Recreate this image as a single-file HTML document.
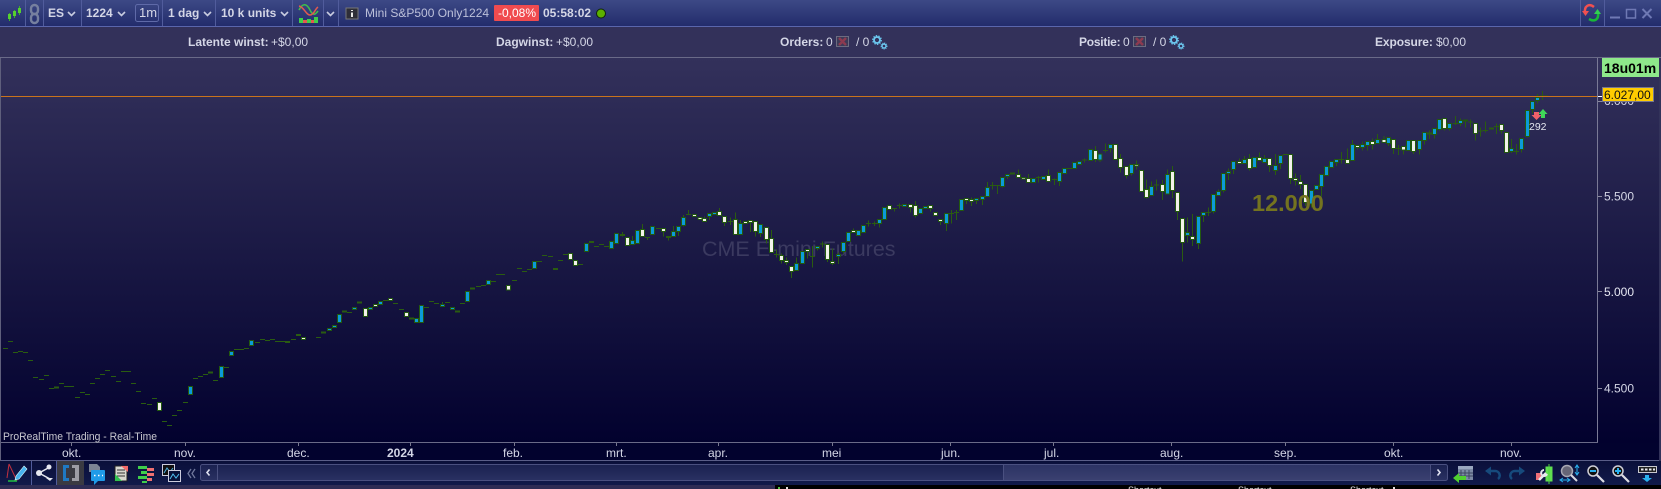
<!DOCTYPE html>
<html lang="nl"><head><meta charset="utf-8"><title>ProRealTime ES</title>
<style>
html,body{margin:0;padding:0;background:#000;width:1661px;height:489px;overflow:hidden}
svg{display:block}
text{font-family:"Liberation Sans",sans-serif;font-size:12px;fill:#d4d6e6}
.h{font-weight:bold}
.w{fill:#f2f2ea;stroke:#22580f;stroke-width:3;transform:translate(-.5px,0)}
.b{fill:#0c9bd8;stroke:#22580f;stroke-width:3;transform:translate(-.5px,0)}
.k{fill:none;stroke:#2a5c10;stroke-width:3;transform:translate(.5px,0)}
.t{fill:none;stroke:#2a5c10;stroke-width:6;transform:translate(.5px,0)}
.c path{shape-rendering:crispEdges}
.d{fill:none;stroke:#c8cce0;stroke-width:1.6}
.s{stroke:#515c9c;stroke-width:1}
</style></head><body>
<svg width="1661" height="489" viewBox="0 0 1661 489" xmlns="http://www.w3.org/2000/svg">
<defs>
<linearGradient id="g1" x1="0" y1="0" x2="0" y2="1"><stop offset="0" stop-color="#3d4986"/><stop offset="1" stop-color="#232c6c"/></linearGradient>
<linearGradient id="g2" x1="0" y1="0" x2="0" y2="1"><stop offset="0" stop-color="#33315b"/><stop offset="1" stop-color="#02012e"/></linearGradient>
<linearGradient id="g3" x1="0" y1="0" x2="0" y2="1"><stop offset="0" stop-color="#0a0f3a"/><stop offset="1" stop-color="#111a4a"/></linearGradient>
<linearGradient id="g4" x1="0" y1="0" x2="0" y2="1"><stop offset="0" stop-color="#1a2150"/><stop offset="1" stop-color="#2a3162"/></linearGradient>
<linearGradient id="g5" x1="0" y1="0" x2="0" y2="1"><stop offset="0" stop-color="#2c3364"/><stop offset="1" stop-color="#3a4070"/></linearGradient>
</defs>
<rect width="1661" height="489" fill="#000"/>
<rect y="0" width="1661" height="26" fill="url(#g1)"/>
<rect y="26" width="1661" height="1" fill="#5a66ac"/>
<rect y="27" width="1661" height="30" fill="#33315a"/>
<rect y="57" width="1661" height="1" fill="#6a6a88"/>
<rect y="58" width="1661" height="385" fill="url(#g2)"/>
<rect y="443" width="1661" height="17" fill="#02022e"/>
<rect y="460" width="1661" height="1" fill="#5a5e88"/>
<rect y="461" width="1661" height="24" fill="url(#g3)"/>
<rect y="485" width="775" height="4" fill="#2e2c54"/>
<rect x="0" y="58" width="1" height="403" fill="#5f5f7c"/>
<rect x="1659" y="58" width="2" height="403" fill="#33335a"/>
<path class="s" d="M25.5 0V26M43.5 0V26M81.5 0V26M162.5 0V26M215.5 0V26M292.5 0V26M323.5 0V26M338.5 0V26M1580.5 0V26M1604.5 0V26"/>

<!-- top toolbar -->
<g fill="none" stroke="#3fae2a"><path d="M9.5 13V21M14.5 10V18M19.5 6V15"/></g>
<g fill="#55d030"><rect x="8" y="14" width="3" height="5"/><rect x="13" y="11" width="3" height="5"/><rect x="18" y="8" width="3" height="5"/></g>
<g fill="none" stroke="#76809f" stroke-width="2.4"><rect x="31" y="5" width="7" height="9" rx="3.5"/><rect x="31" y="14" width="7" height="9" rx="3.5"/></g>
<text x="48" y="17" class="h">ES</text><path class="d" d="M68 12l3.5 3.5L75 12"/>
<text x="86" y="17" class="h">1224</text><path class="d" d="M118 12l3.5 3.5L125 12"/>
<rect x="135.500" y="4.500" width="23" height="17" rx="2" fill="none" stroke="#5f6aa8"/><text x="139" y="17" style="font-size:13px">1m</text>
<text x="168" y="17" class="h">1 dag</text><path class="d" d="M204 12l3.500 3.500L211 12"/>
<text x="221" y="17" class="h">10 k units</text><path class="d" d="M281 12l3.500 3.500L288 12"/>
<path d="M299 10c4-8 8-6 11 0s5 5 8 1" fill="none" stroke="#3fc04a" stroke-width="1.500"/><path d="M299 6c5 1 7 9 11 9s5-6 8-8" fill="none" stroke="#e05a50" stroke-width="1.500"/>
<rect x="299" y="18" width="4" height="5" fill="#3fcf4a"/><rect x="303" y="20" width="4" height="3" fill="#e05a50"/><rect x="307" y="19" width="4" height="4" fill="#3fcf4a"/><rect x="311" y="20" width="3" height="3" fill="#e05a50"/><rect x="314" y="17" width="4" height="6" fill="#3fcf4a"/>
<path class="d" d="M327 12l3.500 3.500L334 12"/>
<rect x="346" y="8" width="12" height="11" fill="#2e2e38" stroke="#777"/><path d="M352 10v1M352 12.500V17" stroke="#e8e8e8" stroke-width="2"/>
<text x="365" y="17" style="fill:#bcc0da">Mini S&amp;P500 Only1224</text>
<rect x="494" y="5" width="45" height="16" rx="1" fill="#f04b4f"/><text x="498" y="17" style="fill:#fff">-0,08%</text>
<text x="543" y="17" class="h">05:58:02</text>
<circle cx="601" cy="13.500" r="4.500" fill="#5cb000" stroke="#10220c"/>
<path d="M1594 7c-5-4-10-1-9 6" fill="none" stroke="#f05050" stroke-width="2.500"/><path d="M1582 11l3.500 5 3.500-5z" fill="#f05050"/>
<path d="M1589 19c5 3 10 1 9-6" fill="none" stroke="#18b838" stroke-width="2.500"/><path d="M1594 14l3.500-5 3.500 5z" fill="#30d050"/>
<path d="M1610 17.500h10" stroke="#6f79b4" stroke-width="2"/>
<rect x="1626.500" y="9.500" width="9" height="8.500" fill="none" stroke="#6f79b4" stroke-width="1.500"/>
<path d="M1642.500 9l9 9M1651.500 9l-9 9" stroke="#6f79b4" stroke-width="2"/>

<!-- stats -->
<text x="188" y="46" class="h">Latente winst:</text><text x="271" y="46">+$0,00</text>
<text x="496" y="46" class="h">Dagwinst:</text><text x="556" y="46">+$0,00</text>
<text x="780" y="46" class="h">Orders:</text><text x="826" y="46">0</text>
<text x="856" y="46">/ 0</text>
<text x="1079" y="46" class="h" style="letter-spacing:-.25px">Positie:</text><text x="1123" y="46">0</text>
<text x="1153" y="46">/ 0</text>
<text x="1375" y="46" class="h" style="letter-spacing:-.1px">Exposure:</text><text x="1436" y="46">$0,00</text>
<rect x="836.500" y="36.500" width="12" height="10" fill="#3c3a58" stroke="#6c6c80"/><path d="M839 38l7 7M846 38l-7 7" stroke="#8c3a50" stroke-width="2.500"/>
<rect x="1133.500" y="36.500" width="12" height="10" fill="#3c3a58" stroke="#6c6c80"/><path d="M1136 38l7 7M1143 38l-7 7" stroke="#8c3a50" stroke-width="2.500"/>
<g fill="none" stroke="#6cc8f0"><circle cx="877" cy="40" r="3" stroke-width="1.800"/><circle cx="877" cy="40" r="4.300" stroke-width="1.300" stroke-dasharray="1.400 1.300"/><circle cx="884" cy="46" r="2" stroke-width="1.400"/><circle cx="884" cy="46" r="3" stroke-width="1" stroke-dasharray="1 1"/><circle cx="1174" cy="40" r="3" stroke-width="1.800"/><circle cx="1174" cy="40" r="4.300" stroke-width="1.300" stroke-dasharray="1.400 1.300"/><circle cx="1181" cy="46" r="2" stroke-width="1.400"/><circle cx="1181" cy="46" r="3" stroke-width="1" stroke-dasharray="1 1"/></g>

<!-- chart watermark -->
<text x="702" y="256" style="font-size:21.500px;fill:#3b3a60">CME E-mini Futures</text>

<g class="c">
<g transform="translate(0,320) scale(.33333)">
<path class="k" d="M9 85h14M24 64h14M39 97h14M54 94h14M69 97h14M84 121h14M99 172h14M117 178h14M132 166h14M147 205h14M177 190h14M192 199h14M207 199h14M225 232h14M240 217h14M255 223h14M270 190h14M285 175h14M300 163h14M315 151h14M333 169h14M348 184h14M363 154h14M378 154h14M393 190h14M408 214h14M423 250h14M441 253h14M456 235h14M486 304h14M501 316h14M516 286h14M531 271h14M549 247h14M579 175h14M594 169h14M609 163h14M639 181h14M672 142h14M702 88h14M717 88h14M732 85h14M765 67h14M780 58h14M795 61h14M810 58h14M825 64h14M840 64h14M873 58h14"/>
<path class="t" d="M162 203h14M624 158h14M855 66h14M888 45h14"/>
<path class="w" d="M473 247h12V272h-12z"/>
<path class="b" d="M566 199h12V223h-12zM659 139h12V172h-12zM689 94h12V106h-12zM749 61h12V76h-12z"/>
</g>
<g transform="translate(300,240) scale(.33333)">
<path class="k" d="M48 292h14M141 217h14M249 181h14M279 190h14M297 208h14M372 202h14M387 184h14M402 190h14M435 187h14M480 190h14M528 139h14M543 136h14M573 124h14M588 103h14M427 186V193"/>
<path class="t" d="M63 278h14M126 215h14M171 188h14M327 236h14M465 215h14M510 146h14"/>
<path class="w" d="M5 292h12V298h-12zM191 205h12V230h-12zM221 193h12V200h-12zM266 175h12V181h-12zM314 217h12V230h-12z"/>
<path class="b" d="M83 265h12V272h-12zM98 256h12V263h-12zM113 223h12V248h-12zM158 202h12V208h-12zM206 202h12V208h-12zM236 184h12V193h-12zM344 236h12V248h-12zM359 196h12V248h-12zM422 193h12V200h-12zM452 202h12V208h-12zM497 154h12V185h-12zM560 121h12V133h-12z"/>
</g>
<g transform="translate(500,190) scale(.33333)">
<path class="k" d="M0 253h14M36 271h14M51 235h14M66 244h14M81 238h14M111 214h14M126 196h14M144 199h14M174 211h14M189 193h14M234 223h14M282 169h14M297 163h14M312 169h14M435 142h14M468 115h14M558 73h14M397 138V151M427 102V118M520 108V124M550 75V110M565 60V75M490 124V140M367 126V140M442 142V150M505 141V152M535 124V138"/>
<path class="t" d="M159 237h14M267 156h14M360 135h14M498 141h14"/>
<path class="w" d="M20 287h12V300h-12zM206 190h12V208h-12zM221 211h12V226h-12zM377 142h12V166h-12zM422 118h12V139h-12zM485 115h12V124h-12zM578 73h12V79h-12z"/>
<path class="b" d="M98 214h12V235h-12zM254 160h12V185h-12zM329 154h12V176h-12zM344 130h12V160h-12zM392 151h12V163h-12zM407 121h12V160h-12zM452 109h12V133h-12zM515 124h12V139h-12zM530 109h12V124h-12zM545 82h12V106h-12z"/>
</g>
<g transform="translate(700,170) scale(.33333)">
<path class="k" d="M84 155h14M222 253h14M330 260h14M360 222h14M498 161h14M516 161h14M576 116h14M591 107h14M747 131h14M762 128h14M870 46h14M885 46h15M13 140V146M28 139V150M58 114V124M73 157V168M91 143V165M106 128V149M121 150V161M151 157V186M166 184V200M181 190V201M199 208V220M214 180V206M229 238V262M244 250V257M244 272V280M259 262V272M259 277V285M274 304V324M289 262V281M322 244V265M337 228V292M352 236V242M367 215V232M382 268V276M397 236V275M397 280V285M415 247V282M430 245V250M460 175V182M505 152V170M523 155V168M538 160V172M583 116V125M598 100V115M631 112V127M646 93V107M646 136V143M691 115V125M721 154V165M739 161V183M754 120V160M769 120V150M799 91V102M814 82V108M829 91V102M847 88V105M862 36V53M877 36V58M892 46V72"/>
<path class="w" d="M-5 143h12V148h-12zM8 146h12V154h-12zM53 124h12V136h-12zM68 139h12V157h-12zM101 149h12V193h-12zM131 155h12V160h-12zM146 152h12V157h-12zM161 155h12V184h-12zM194 173h12V208h-12zM209 206h12V247h-12zM239 257h12V272h-12zM254 272h12V277h-12zM269 290h12V304h-12zM317 239h12V244h-12zM377 224h12V268h-12zM392 275h12V280h-12zM455 182h12V187h-12zM563 107h12V118h-12zM626 104h12V112h-12zM641 107h12V136h-12zM686 107h12V115h-12zM701 127h12V136h-12zM716 149h12V154h-12zM794 86h12V91h-12zM809 89h12V94h-12z"/>
<path class="b" d="M23 130h12V139h-12zM38 127h12V133h-12zM116 161h12V193h-12zM176 164h12V190h-12zM284 281h12V302h-12zM302 245h12V281h-12zM347 229h12V236h-12zM410 254h12V259h-12zM425 218h12V245h-12zM440 188h12V215h-12zM470 182h12V196h-12zM485 167h12V188h-12zM533 149h12V160h-12zM548 113h12V149h-12zM608 104h12V109h-12zM656 116h12V131h-12zM671 110h12V116h-12zM734 131h12V161h-12zM779 89h12V122h-12zM824 86h12V91h-12zM842 80h12V88h-12zM857 53h12V79h-12z"/>
</g>
<g transform="translate(1000,130) scale(.33333)">
<path class="k" d="M108 143h14M156 148h14M201 115h14M246 90h14M55 118V134M85 132V146M115 138V158M145 118V136M163 146V165M178 154V168M7 170V173M22 140V147M253 85V97M286 48V62M286 88V96"/>
<path class="t" d="M30 131h14"/>
<path class="w" d="M50 134h12V142h-12zM65 143h12V147h-12zM80 146h12V157h-12zM140 136h12V154h-12zM281 62h12V88h-12z"/>
<path class="b" d="M2 142h12V170h-12zM17 134h12V140h-12zM95 146h12V157h-12zM125 139h12V148h-12zM173 127h12V154h-12zM188 115h12V130h-12zM218 97h12V115h-12zM233 94h12V103h-12zM266 58h12V91h-12z"/>
</g>
<g transform="translate(1100,130) scale(.33333)">
<path class="k" d="M9 62h14M162 165h14M318 247h14M549 74h14M717 89h14M888 55h14M0 90V96M16 40V68M31 55V68M61 72V85M61 112V128M79 136V145M94 130V137M109 92V103M109 108V118M139 148V179M139 202V205M154 155V170M169 148V182M187 150V163M187 184V210M202 118V134M217 108V125M217 181V204M232 244V270M247 337V395M262 262V307M262 316V337M277 252V320M277 328V348M295 340V357M310 256V276M325 232V258M340 245V250M355 178V184M370 181V188M385 116V124M385 130V150M400 118V132M418 85V95M433 78V89M448 72V86M448 115V122M478 68V83M493 75V86M508 106V126M526 72V107M526 121V135M541 100V117M571 145V162M586 130V146M586 151V167M601 135V155M601 163V177M616 217V228M634 222V232M664 170V200M709 97V108M724 66V100M742 55V89M757 30V44M772 52V58M787 35V44M787 52V62M802 47V62M817 25V35M817 43V58M832 12V29M851 18V29M865 40V48M880 55V72M895 45V75"/>
<path class="w" d="M41 43h12V88h-12zM56 85h12V112h-12zM74 110h12V136h-12zM104 103h12V108h-12zM119 122h12V184h-12zM134 179h12V202h-12zM182 163h12V184h-12zM212 125h12V181h-12zM227 188h12V244h-12zM242 265h12V337h-12zM272 320h12V328h-12zM413 95h12V100h-12zM443 86h12V115h-12zM473 83h12V91h-12zM503 86h12V106h-12zM566 74h12V145h-12zM581 146h12V151h-12zM596 155h12V163h-12zM611 164h12V217h-12zM737 89h12V100h-12zM767 47h12V52h-12zM812 35h12V43h-12zM846 29h12V37h-12zM875 29h12V55h-12z"/>
<path class="b" d="M-5 72h12V90h-12zM26 43h12V55h-12zM89 104h12V130h-12zM149 170h12V196h-12zM197 134h12V192h-12zM257 307h12V316h-12zM290 260h12V340h-12zM305 248h12V256h-12zM335 194h12V245h-12zM350 184h12V196h-12zM365 130h12V181h-12zM380 124h12V130h-12zM395 94h12V118h-12zM428 89h12V100h-12zM458 83h12V112h-12zM488 86h12V97h-12zM521 107h12V121h-12zM536 77h12V100h-12zM629 182h12V222h-12zM644 167h12V178h-12zM659 134h12V170h-12zM674 110h12V136h-12zM689 95h12V112h-12zM704 89h12V97h-12zM752 44h12V91h-12zM782 44h12V52h-12zM797 35h12V47h-12zM827 29h12V40h-12zM860 23h12V40h-12z"/>
</g>
<g transform="translate(1400,90) scale(.33333)">
<path class="k" d="M159 101h14M204 96h14M234 123h14M249 121h14M282 109h14M342 184h14M420 18h24M10 180V194M40 184V192M58 178V193M73 151V163M88 122V147M103 133V145M118 118V122M133 115V122M148 115V122M166 78V105M181 85V108M196 93V113M211 88V113M226 130V152M241 112V140M256 95V128M289 100V132M304 121V130M334 147V189M349 162V193M364 178V188M382 139V142M397 59V70M412 12V40M427 3V30"/>
<path class="t" d="M81 130h14M267 116h14"/>
<path class="w" d="M5 170h12V180h-12zM35 152h12V184h-12zM128 85h12V115h-12zM191 90h12V93h-12zM221 100h12V130h-12zM299 103h12V121h-12zM314 127h12V187h-12z"/>
<path class="b" d="M20 152h12V181h-12zM53 152h12V178h-12zM68 127h12V151h-12zM98 115h12V133h-12zM113 88h12V118h-12zM143 100h12V115h-12zM176 92h12V100h-12zM329 176h12V184h-12zM359 145h12V178h-12zM377 62h12V139h-12zM392 35h12V59h-12zM407 22h12V31h-12z"/>
</g>
</g>

<text x="1252" y="211" class="h" style="font-size:23.500px;fill:#74731f">12.000</text>

<!-- axes -->
<rect x="1" y="96" width="1596" height="1" fill="#c9731c"/>
<rect x="1597" y="58" width="1" height="385" fill="#7a7a96"/>
<rect x="1" y="442" width="1597" height="1" fill="#6a6a88"/>
<path d="M1598 96.500h4" stroke="#fff"/>
<path d="M1598 101.500h4M1598 196.500h4M1598 291.500h4M1598 388.500h4" stroke="#8a8aa0"/>
<text x="1604" y="105">6.000</text>
<text x="1604" y="200.500">5.500</text>
<text x="1604" y="296" style="fill:#e6e8f2">5.000</text>
<text x="1604" y="392.500">4.500</text>
<rect x="1602" y="58" width="57" height="19" fill="#8ee88a"/>
<text x="1604" y="73" class="h" style="font-size:14px;fill:#000">18u01m</text>
<rect x="1602.500" y="87.500" width="51" height="14" fill="#ffcc00" stroke="#777790"/>
<text x="1604" y="99" style="fill:#111">6.027,00</text>
<path d="M1534 112h5v3h2.500l-5 5-5-5h2.500z" fill="#f2606a"/>
<path d="M1541 118h4v-4h2.500l-4.500-5-4.500 5h2.500z" fill="#3fd858"/>
<text x="1529" y="130" style="font-size:10.500px;fill:#e4e6f0">292</text>
<text x="3" y="440" style="font-size:11px;fill:#c8c8d0" textLength="154" lengthAdjust="spacingAndGlyphs">ProRealTime Trading - Real-Time</text>
<path d="M71.500 443v3M185.500 443v3M298.500 443v3M410.500 443v3M514.500 443v3M616.500 443v3M718.500 443v3M832.500 443v3M950.500 443v3M1053.500 443v3M1171.500 443v3M1285.500 443v3M1393.500 443v3M1511.500 443v3" stroke="#77778f"/>
<g>
<text x="62" y="457">okt.</text><text x="174" y="457">nov.</text><text x="287" y="457">dec.</text>
<text x="387" y="457" class="h">2024</text>
<text x="503" y="457">feb.</text><text x="606" y="457">mrt.</text><text x="708" y="457">apr.</text><text x="822" y="457">mei</text><text x="941" y="457">jun.</text><text x="1044" y="457">jul.</text><text x="1160" y="457">aug.</text><text x="1274" y="457">sep.</text><text x="1384" y="457">okt.</text><text x="1500" y="457">nov.</text>
</g>

<!-- bottom toolbar left -->
<path d="M9 464L17 481M9 464l-2 14" stroke="#c03040" fill="none"/><path d="M8 481h9" stroke="#20c040" stroke-width="1.500"/>
<path d="M24 466l-8 10-1 4 4-1 8-10z" fill="#48b4ee" stroke="#dff" stroke-width=".6"/>
<path class="s" d="M31.500 461V485M56.500 461V485"/>
<path d="M50 467L39 473l11 6" fill="none" stroke="#e6e8f0" stroke-width="1.500"/><circle cx="39" cy="473" r="3" fill="#e6e8f0"/><circle cx="49" cy="467" r="2.500" fill="#e6e8f0"/><path d="M46 478h7l-3 3z" fill="#e6e8f0"/>
<rect x="57" y="461" width="27" height="24" fill="#3a3a42"/>
<path d="M69 465h-6v16h6v-3h-3v-10h3z" fill="#1f79c2"/><path d="M72 465h7v16h-7v-3h3v-10h-3z" fill="#9c9ca4"/>
<path d="M89 464h8l3 3v5h-11z" fill="#7c8494"/><path d="M92 470h12a1 1 0 0 1 1 1v9a1 1 0 0 1-1 1h-6l-4 4v-4h-2a1 1 0 0 1-1-1v-9a1 1 0 0 1 1-1z" fill="#1f9be8"/><path d="M94 475.500h1.500M98 475.500h1.500M102 475.500h1" stroke="#fff" stroke-width="1.500"/>
<path d="M115 466h12v15h-12z" fill="#d8d8d0" stroke="#222"/><path d="M117 470h8M117 473h8M117 476h8" stroke="#333"/><path d="M121 466h7v6z" fill="#f26a6a"/><path d="M115 481v-7l7 7z" fill="#30c050"/>
<path d="M138 466h9v3h-9zM141 471h6v3h-6zM138 476h9v3h-9z" fill="#3fcf4a"/><path d="M147 468h7v3h-7zM147 473h7v3h-7zM147 478h5v3h-5z" fill="#f07070"/><path d="M142 481h5v2h-5z" fill="#3fcf4a"/>
<rect x="162.500" y="464.500" width="12" height="11" fill="#111" stroke="#ccd"/><path d="M164 473l3-5 3 4 3-4" stroke="#50b0e0" fill="none"/>
<rect x="168.500" y="470.500" width="12" height="11" fill="#071038" stroke="#ccd"/><path d="M170 479l3-5 3 4 3-4" stroke="#50c0f0" fill="none"/>
<path d="M191 469l-3 4.500 3 4.500M195 469l-3 4.500 3 4.500" fill="none" stroke="#70789c" stroke-width="1.300"/>
<!-- scrollbar -->
<rect x="200.500" y="464.500" width="1247" height="16" rx="2" fill="url(#g4)" stroke="#4a5080"/>
<rect x="1003" y="465" width="427" height="15" fill="url(#g5)"/>
<path d="M217.500 465V480M1003.500 465V480M1430.500 465V480" stroke="#4a5080"/>
<path d="M209.500 469.500l-2.500 3 2.500 3" fill="none" stroke="#e0e2f0" stroke-width="1.600"/><path d="M1437.500 469.500l2.500 3-2.500 3" fill="none" stroke="#e0e2f0" stroke-width="1.600"/>
<!-- bottom toolbar right -->
<rect x="1458" y="466" width="15" height="14" fill="#7c8aa4"/><rect x="1458" y="466" width="15" height="3" fill="#9aa8c0"/><path d="M1461 470v9M1465 470v9M1469 470v9M1458 473h15M1458 476h15" stroke="#3c4660"/>
<path d="M1453 478l6-5v3h7v4h-7v3z" fill="#50d030"/>
<path d="M1490 471h5a4.500 4.500 0 0 1 3 8" fill="none" stroke="#164a7c" stroke-width="2.500"/><path d="M1485 471l6-4.500v9z" fill="#164a7c"/>
<path d="M1520 471h-5a4.500 4.500 0 0 0-3 8" fill="none" stroke="#164a7c" stroke-width="2.500"/><path d="M1525 471l-6-4.500v9z" fill="#164a7c"/>
<rect x="1536" y="473" width="5" height="7" fill="#f07078"/><rect x="1546" y="467" width="6" height="14" fill="#60e050" stroke="#60e050"/><path d="M1549 464v20" stroke="#50d040"/><path d="M1539 480l7-7" stroke="#e8e8ee" stroke-width="2.500"/><path d="M1544 470a3 3 0 1 0 3 4" fill="none" stroke="#e8e8ee" stroke-width="2"/>
<circle cx="1567" cy="471" r="5.500" fill="#667" stroke="#a8a8b4" stroke-width="1.500"/><path d="M1571 475l6 6" stroke="#d8d8e0" stroke-width="2"/><path d="M1577 466v8M1575 468l2-3 2 3M1575 472l2 3 2-3M1561 480h8M1563 478l-3 2 3 2M1567 478l3 2-3 2" stroke="#2ab0ee" fill="none"/>
<circle cx="1593" cy="471" r="5" fill="#111" stroke="#d0d0d8" stroke-width="1.500"/><path d="M1590 471h6" stroke="#2ab0ee" stroke-width="2"/><path d="M1597 475l7 7" stroke="#dcdce4" stroke-width="2.200"/>
<circle cx="1618" cy="471" r="5" fill="#111" stroke="#d0d0d8" stroke-width="1.500"/><path d="M1615 471h6M1618 468v6" stroke="#2ab0ee" stroke-width="2"/><path d="M1622 475l7 7" stroke="#dcdce4" stroke-width="2.200"/>
<rect x="1638.500" y="466.500" width="18" height="6" fill="#222" stroke="#c8c8d0"/><path d="M1641 469.500h2.500M1645 469.500h2.500M1649 469.500h2.500M1653 469.500h2" stroke="#e8e8f0" stroke-width="2"/><path d="M1645 475h4v3h3l-5 4-5-4h3z" fill="#2ab0ee"/>
<!-- clipped row under the window -->
<text x="1128" y="493" style="font-size:9px;fill:#e8e8e8">Shortcut</text><text x="1238" y="493" style="font-size:9px;fill:#e8e8e8">Shortcut</text><text x="1350" y="493" style="font-size:9px;fill:#e8e8e8">Shortcut</text>
<rect x="778" y="487" width="2" height="2" fill="#4fc040"/><rect x="786" y="487" width="2" height="2" fill="#e0e0e0"/><rect x="1393" y="487" width="2" height="2" fill="#e0e0e0"/>
</svg>
</body></html>
